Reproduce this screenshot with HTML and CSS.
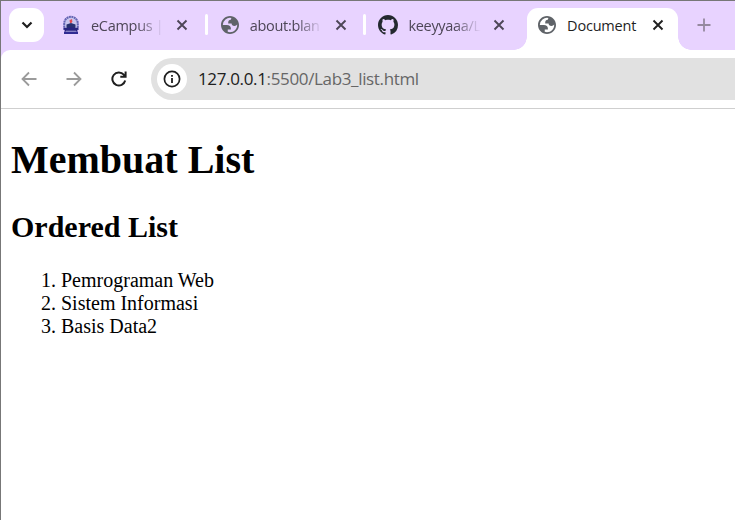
FILE: index.html
```html
<!DOCTYPE html>
<html lang="id">
<head>
<meta charset="utf-8">
<title>Document</title>
<link rel="stylesheet" href="styles.css">
</head>
<body>
<svg class="defs" aria-hidden="true">
  <symbol id="globe" viewBox="2 2 20 20"><path fill="currentColor" fill-rule="evenodd" d="M12 2C6.480 2 2 6.480 2 12s4.480 10 10 10 10-4.480 10-10S17.520 2 12 2zM4 12h4.400c3.407.022 4.922 1.730 4.543 5.127H9.488v2.470a8.004 8.004 0 0 0 10.498-8.083C19.327 12.504 18.332 13 17 13c-2.137 0-3.206-.916-3.206-2.750h-3.748c-.274-2.728.683-4.092 2.870-4.092 0-.975.327-1.597.811-1.970A8 8 0 0 0 4 12z"/></symbol>
  <symbol id="close" viewBox="0 0 12 12"><path d="M1.500 1.500l9 9M10.500 1.500l-9 9" fill="none" stroke="currentColor" stroke-width="1.900"/></symbol>
</svg>
<div class="window">
  <header class="tabstrip">
    <button class="tab-search" aria-label="Tab search"><svg width="12" height="8" viewBox="0 0 12 8"><path d="M1.500 1.500L6 6l4.500-4.500" fill="none" stroke="#1f1f1f" stroke-width="2.200"/></svg></button>
    <nav class="tabs">
      <div class="tab">
        <span class="favicon"><svg width="18" height="20" viewBox="0 0 18 20">
          <path d="M2.200 15V8.500a6.800 6.800 0 0 1 13.600 0V15" fill="#c9c5ee" stroke="#6565b3" stroke-width="2" stroke-dasharray="2 .5"/>
          <path d="M4.500 9.500L9 8l4.500 1.500v4h-9z" fill="#28306f"/><path d="M8 8l-.5-2.700L10 4l.3 2.500L9.500 8z" fill="#e34b52"/>
          <path d="M1.500 12.500l3.500.5 4-1 4 1 3.500-.5-1.500 4H3z" fill="#29237f"/><path d="M2 16.500h14V19H2z" fill="#302b93"/><path d="M4 16.200h10" stroke="#9c99d4"/></svg></span>
        <span class="title">eCampus |</span><svg class="close"><use href="#close"/></svg>
      </div>
      <div class="tab divided">
        <span class="favicon"><svg class="globe"><use href="#globe"/></svg></span>
        <span class="title">about:blan</span><svg class="close"><use href="#close"/></svg>
      </div>
      <div class="tab divided">
        <span class="favicon"><svg width="20" height="20" viewBox="0 0 16 16"><path fill="#24292f" d="M8 0C3.580 0 0 3.580 0 8c0 3.540 2.290 6.530 5.470 7.590.4.070.55-.17.55-.38 0-.19-.01-.82-.01-1.490-2.010.37-2.530-.49-2.690-.94-.09-.23-.48-.94-.82-1.130-.28-.15-.68-.52-.01-.53.63-.01 1.080.58 1.230.82.72 1.210 1.870.87 2.330.66.07-.52.28-.87.51-1.070-1.780-.2-3.640-.89-3.640-3.950 0-.87.31-1.590.82-2.150-.08-.2-.36-1.020.08-2.120 0 0 .67-.21 2.200.82.64-.18 1.320-.27 2-.27s1.360.09 2 .27c1.530-1.040 2.200-.82 2.200-.82.44 1.100.16 1.920.08 2.120.51.56.82 1.270.82 2.150 0 3.070-1.870 3.750-3.650 3.950.29.25.54.73.54 1.480 0 1.070-.01 1.930-.01 2.200 0 .21.15.46.55.38A8.010 8.010 0 0 0 16 8c0-4.420-3.580-8-8-8z"/></svg></span>
        <span class="title">keeyyaaa/L</span><svg class="close"><use href="#close"/></svg>
      </div>
      <div class="tab active">
        <span class="favicon"><svg class="globe"><use href="#globe"/></svg></span>
        <span class="title">Document</span><svg class="close"><use href="#close"/></svg>
      </div>
    </nav>
    <button class="new-tab" aria-label="New tab"><svg width="14" height="14" viewBox="0 0 14 14"><path d="M7 .5v13M.5 7h13" stroke="#95899f" stroke-width="1.800"/></svg></button>
  </header>
  <div class="toolbar-wrap">
    <div class="toolbar">
      <svg class="nav" viewBox="0 0 16 16"><path d="M15.500 8H2M8 1.500L1.500 8 8 14.500" fill="none" stroke="#9b9b9b" stroke-width="1.800"/></svg>
      <svg class="nav" viewBox="0 0 16 16"><path d="M.5 8H14M8 1.500L14.500 8 8 14.500" fill="none" stroke="#9b9b9b" stroke-width="1.800"/></svg>
      <svg class="nav" viewBox="0 0 16 16"><path d="M14.200 9.500A6.500 6.500 0 1 1 12.800 3.700L14.500 5.400M14.600 .5v5.300H9.300" fill="none" stroke="#1f1f1f" stroke-width="2"/></svg>
      <div class="address">
        <span class="site-info"><svg width="18" height="18" viewBox="0 0 18 18"><circle cx="9" cy="9" r="7.600" fill="none" stroke="#1f1f1f" stroke-width="1.700"/><path d="M9 8v5M9 5v1.800" stroke="#1f1f1f" stroke-width="1.800"/></svg></span>
        <span class="url"><span class="host">127.0.0.1</span>:5500/Lab3_list.html</span>
      </div>
    </div>
  </div>
  <main class="page">
    <h1>Membuat List</h1>
    <h2>Ordered List</h2>
    <ol>
      <li>Pemrograman Web</li>
      <li>Sistem Informasi</li>
      <li>Basis Data2</li>
    </ol>
  </main>
</div>
</body>
</html>
```
FILE: styles.css
```css
* { box-sizing: border-box; }
body { margin: 0; background: #fff; overflow: hidden; }
button { border: 0; padding: 0; background: none; display: grid; place-items: center; }
.defs { position: absolute; width: 0; height: 0; }
.window {
  height: 520px;
  border-top: 1px solid #777;
  border-left: 1px solid #777;
  display: flex;
  flex-direction: column;
}
.tabstrip {
  height: 49px;
  flex: none;
  display: flex;
  padding: 7px 0 0 8px;
  background: #e8d3ff;
  font-family: "Open Sans", "Noto Sans", sans-serif;
}
.tab-search { width: 35px; height: 34px; border-radius: 11px; background: #fff; }
.tabs { display: flex; margin-left: 4px; }
.tab {
  position: relative;
  width: 158.700px;
  height: 42px;
  display: flex;
  align-items: flex-start;
  padding: 7px 0 0 13px;
  color: #4d4657;
}
.favicon { width: 20px; height: 20px; display: grid; place-items: center; flex: none; }
.globe { width: 18px; height: 18px; color: #5f6368; }
.title {
  width: 75px;
  height: 22px;
  line-height: 22px;
  margin-left: 10px;
  font-size: 14.500px;
  letter-spacing: -.3px;
  white-space: nowrap;
  mask-image: linear-gradient(90deg, #000 62%, transparent 97%);
}
.close { width: 12px; height: 12px; margin: 4px 0 0 10px; flex: none; }
.divided::before {
  content: "";
  position: absolute;
  left: -2px;
  top: 6px;
  width: 3px;
  height: 21px;
  border-radius: 1.500px;
  background: #fff;
}
.active { color: #1f1f1f; z-index: 0; }
.active .title { mask-image: none; letter-spacing: -.2px; }
.active::before {
  content: "";
  position: absolute;
  z-index: -1;
  inset: 0 5px 0 3px;
  border-radius: 11px 11px 0 0;
  background: #fff;
}
.active::after {
  content: "";
  position: absolute;
  z-index: -1;
  left: -10px;
  right: -8px;
  bottom: 0;
  height: 13px;
  background:
    radial-gradient(circle at 0 0, transparent 12.500px, #fff 13px) left / 13px 13px no-repeat,
    radial-gradient(circle at 100% 0, transparent 12.500px, #fff 13px) right / 13px 13px no-repeat;
}
.new-tab { width: 34px; height: 34px; margin-left: 4px; }
.toolbar-wrap { flex: none; background: linear-gradient(#e8d3ff 10px, #fff 10px); }
.toolbar {
  height: 59px;
  display: flex;
  align-items: center;
  padding-left: 20px;
  border-bottom: 1px solid #cfcfcf;
  background: #fff;
  border-top-left-radius: 9px;
}
.nav { width: 16px; height: 16px; margin-right: 29px; flex: none; }
.address {
  flex: 1;
  height: 42px;
  display: flex;
  align-items: center;
  padding-left: 6px;
  margin-left: -5px;
  border-radius: 21px 0 0 21px;
  background: #e1e1e1;
}
.site-info { width: 30px; height: 30px; border-radius: 50%; background: #fff; display: grid; place-items: center; }
.url { margin-left: 11px; font: 17px/24px "Open Sans", "Noto Sans", sans-serif; letter-spacing: -.35px; color: #666; white-space: nowrap; }
.host { color: #202020; }
.page { padding: 0 10px; font: 20px/23px "Liberation Serif", "Times New Roman", serif; color: #000; }
h1 { font-size: 40px; line-height: 46px; margin: 28px 0 27px; }
h2 { font-size: 30px; line-height: 34px; margin: 0 0 25px; }
ol { margin: 0; padding-left: 50px; }
```
